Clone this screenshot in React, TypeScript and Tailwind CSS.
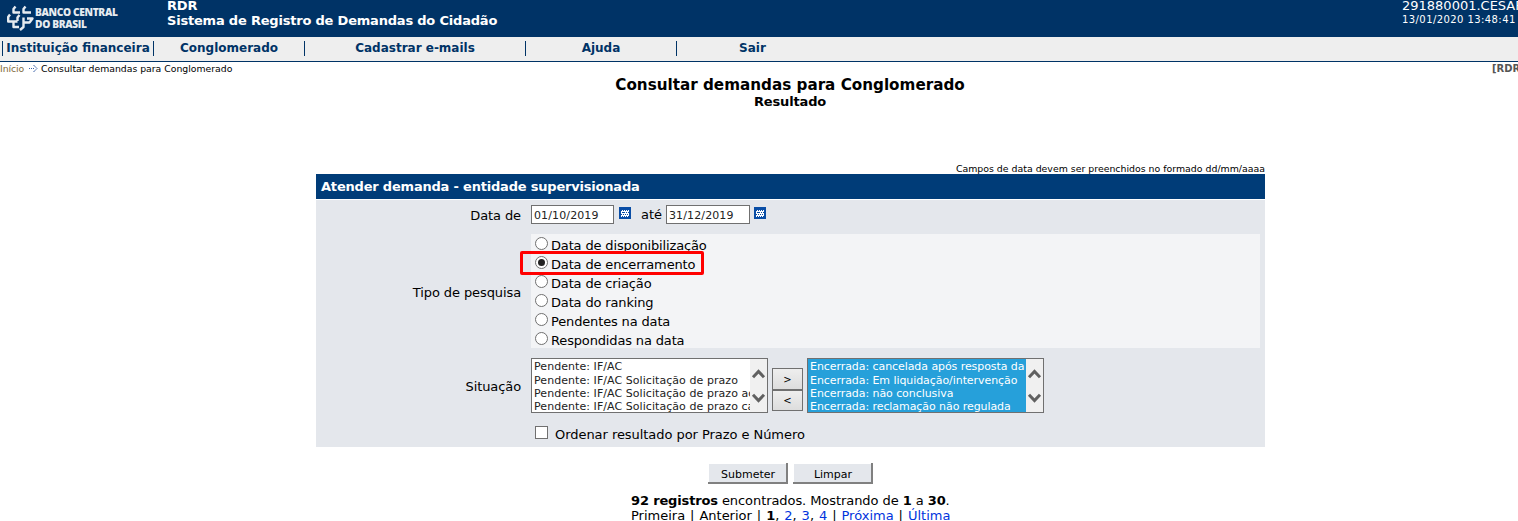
import React from "react";

type ListProps = { items: string[]; selected?: boolean };

function Calendar() {
  return (
    <svg width="12" height="12" viewBox="0 0 12 12" shapeRendering="crispEdges" className="shrink-0">
      <rect width="12" height="12" fill="#0a4ea6" />
      <rect x="2" y="3" width="8" height="7" fill="#fff" />
      {[3, 5, 7, 9].map((y) =>
        [2, 4, 6, 8].map((x) => <rect key={`${x}-${y}`} x={x + (y % 4 === 1 ? 1 : 0)} y={y} width="1" height="1" fill="#0a4ea6" />),
      )}
      <rect x="4" y="5" width="2" height="1" fill="#0a4ea6" />
    </svg>
  );
}

function ListBox({ items, selected }: ListProps) {
  return (
    <div className="flex h-[55px] w-[237px] shrink-0 border border-[#707070] bg-white">
      <div className={`flex-1 overflow-hidden whitespace-nowrap pl-[2px] text-[11px] ${selected ? "bg-[#26a0da] tracking-[-0.07px] text-white" : "tracking-[0.06px] text-[#222]"}`}>
        {items.map((item, i) => (
          <div key={item} className={i === 0 ? "h-[14px] leading-[15px]" : "h-[13px] leading-[15px]"}>
            {item}
          </div>
        ))}
      </div>
      <div className="flex w-[17px] flex-col items-center justify-between bg-[#f0f0f0] pb-[8px] pt-[9px]">
        <svg width="15" height="12" viewBox="0 0 15 12"><path d="M2 9.3 L7.5 3.5 L13 9.3" fill="none" stroke="#606060" strokeWidth="3" /></svg>
        <svg width="15" height="12" viewBox="0 0 15 12"><path d="M2 2.7 L7.5 8.5 L13 2.7" fill="none" stroke="#606060" strokeWidth="3" /></svg>
      </div>
    </div>
  );
}

const options = ["Data de disponibilização", "Data de encerramento", "Data de criação", "Data do ranking", "Pendentes na data", "Respondidas na data"];

export default function App() {
  return (
    <div className="h-[521px] w-[1518px] overflow-hidden bg-white font-['DejaVu_Sans',sans-serif] text-[13px] leading-[15px] text-black">
      <header className="flex h-[37px] whitespace-nowrap bg-[#003366] text-white">
        <div className="flex w-[167px] pl-[7px] pt-[5px]">
          <svg width="27" height="26" viewBox="0 0 27 26" fill="none" stroke="#e6ebf0" strokeWidth="2.4" strokeLinejoin="round">
            <path d="M8.500 1.500 6.500 4v3.500h6.500M18.500 1.500 16.500 4v3.500h7.500" />
            <path d="M3 9.500 1.200 12v4.500h9.300M12.500 10 10.500 12.500v3.500" />
            <path d="M6.500 16.500v5.500h5.500M20 13.500h5.500l-3 4h-6v4.500l-3.500 3M16.500 17.500v-5" />
          </svg>
          <div className="pl-[1px] pt-[1px] font-['Open_Sans',sans-serif] text-[10.2px] font-extrabold leading-[12px] tracking-[-0.35px] text-[#e6ebf0]">
            <div>BANCO CENTRAL</div>
            <div>DO BRASIL</div>
          </div>
        </div>
        <div className="flex-1 font-bold tracking-[-0.2px]"><div className="-mt-[2px]">RDR</div><div>Sistema de Registro de Demandas do Cidadão</div></div>
        <div className="w-[116px]"><div className="-mt-[2px]">291880001.CESAR</div><div className="text-[10px] leading-[14px] tracking-[0.42px]">13/01/2020 13:48:41</div></div>
      </header>
      <nav className="flex h-[25px] items-center whitespace-nowrap border-b border-[#003366] bg-[#eeeeee] pb-[1px] text-center text-[12px] font-bold leading-[15px] text-[#003366]">
        <div className="ml-[2px] w-[152px] border-x border-[#003366]">Instituição financeira</div>
        <div className="w-[151px] border-r border-[#003366]">Conglomerado</div>
        <div className="w-[221px] border-r border-[#003366]">Cadastrar e-mails</div>
        <div className="w-[151px] border-r border-[#003366]">Ajuda</div>
        <div className="w-[151px]">Sair</div>
      </nav>
      <div className="flex h-[14px] justify-between overflow-hidden whitespace-nowrap text-[9.3px] leading-[14px]">
        <div className="flex items-center"><span className="w-[29px] tracking-[-0.1px] text-[#806a3a]">Início</span>
          <svg width="9" height="9" viewBox="0 0 9 9" fill="none" stroke="#3960a8" className="mr-[3px]"><path d="M0 3.500h5" strokeDasharray="1 1" /><path d="M4.500 0 8 3.500 4.500 7" strokeDasharray="1.400 .3" /></svg>
          <span>Consultar demandas para Conglomerado</span></div>
        <div className="w-[26px] text-[10px] font-bold text-[#555]">[RDR</div>
      </div>
      <h1 className="mt-[1px] text-center text-[15.2px] font-bold leading-[16px]"><span className="ml-[62px]">Consultar demandas para Conglomerado</span></h1>
      <div className="ml-[62px] text-center font-bold leading-[17px] tracking-[-0.15px]">Resultado</div>
      <main className="ml-[316px] w-[949px]">
        <div className="mt-[52px] h-[12px] text-right text-[9.38px] leading-[13px]">Campos de data devem ser preenchidos no formado dd/mm/aaaa</div>
        <div className="mb-px h-[25px] bg-[#003c78] pl-[5px] font-bold leading-[26px] tracking-[-0.2px] text-white">Atender demanda - entidade supervisionada</div>
        <section className="h-[247px] bg-[#e4e7ec]">
          <div className="flex h-[34px] pt-[5px]">
            <div className="w-[205px] pt-[3px] text-right tracking-[-0.1px]">Data de</div>
            <div className="ml-[10px] h-[19px] w-[83px] border border-[#707070] bg-white pl-[2px] text-[11px] leading-[19px] tracking-[0.12px] text-[#222]">01/10/2019</div>
            <div className="ml-[5px] pt-[2px]"><Calendar /></div>
            <div className="ml-[10px] w-[25px] pt-[2px]">até</div>
            <div className="h-[19px] w-[84px] border border-[#707070] bg-white pl-[2px] text-[11px] leading-[19px] tracking-[0.12px] text-[#222]">31/12/2019</div>
            <div className="ml-[4px] pt-[2px]"><Calendar /></div>
          </div>
          <div className="flex h-[114px]">
            <div className="w-[205px] pt-[51px] text-right tracking-[-0.1px]">Tipo de pesquisa</div>
            <div className="relative ml-[10px] w-[729px] bg-[#f3f4f6] pl-[4px]">
              {options.map((o, i) => (
                <label key={o} className="flex h-[19px]">
                  <span className="mt-[3px] flex size-[13px] items-center justify-center rounded-full border border-[#707070] bg-white">{i === 1 && <span className="size-[7px] rounded-full bg-[#222]" />}</span>
                  <span className="ml-[3px] pt-[4px] tracking-[-0.15px]">{o}</span>
                </label>
              ))}
              <div className="absolute -left-[11px] top-[17px] h-[24px] w-[184px] rounded-[2px] border-[3px] border-[#ff0000]" />
            </div>
          </div>
          <div className="mt-[10px] flex h-[55px]">
            <div className="mr-[10px] w-[205px] pt-[21px] text-right tracking-[-0.1px]">Situação</div>
            <ListBox items={["Pendente: IF/AC", "Pendente: IF/AC Solicitação de prazo", "Pendente: IF/AC Solicitação de prazo aceita", "Pendente: IF/AC Solicitação de prazo cancelada"]} />
            <div className="mx-[4px] mt-[10px] w-[31px] text-center text-[10px]">
              <div className="h-[22px] border border-[#707070] bg-gradient-to-b from-[#eee] to-[#ddd] leading-[21px]">&gt;</div>
              <div className="h-[21px] border border-[#707070] bg-gradient-to-b from-[#eee] to-[#ddd] leading-[20px]">&lt;</div>
            </div>
            <ListBox selected items={["Encerrada: cancelada após resposta da", "Encerrada: Em liquidação/intervenção", "Encerrada: não conclusiva", "Encerrada: reclamação não regulada"]} />
          </div>
          <div className="ml-[219px] mt-[13px] flex"><span className="size-[13px] border border-[#707070] bg-white" /><span className="ml-[7px] pt-[1px] tracking-[-0.05px]">Ordenar resultado por Prazo e Número</span></div>
        </section>
      </main>
      <div className="ml-[708px] mt-[16px] flex gap-[5px] text-center text-[11px] leading-[23px]">
        <div className="h-[21px] w-[80px] border-b-2 border-r-2 border-[#808080] bg-[#e4e7ec] pl-[2px] shadow-[inset_1px_1px_0_#fff]">Submeter</div>
        <div className="h-[21px] w-[80px] border-b-2 border-r-2 border-[#808080] bg-[#e4e7ec] pl-[2px] shadow-[inset_1px_1px_0_#fff]">Limpar</div>
      </div>
      <div className="ml-[631px] mt-[9px] whitespace-nowrap"><div className="tracking-[-0.07px]"><b className="tracking-[-0.15px]">92 registros</b> encontrados. Mostrando de <b>1</b> a <b>30</b>.</div>
        <div className="[word-spacing:0.8px]">Primeira | Anterior | <b>1</b>, <span className="text-[#0033dd]">2</span>, <span className="text-[#0033dd]">3</span>, <span className="text-[#0033dd]">4</span> | <span className="text-[#0033dd]">Próxima</span> | <span className="text-[#0033dd]">Última</span></div>
      </div>
    </div>
  );
}
